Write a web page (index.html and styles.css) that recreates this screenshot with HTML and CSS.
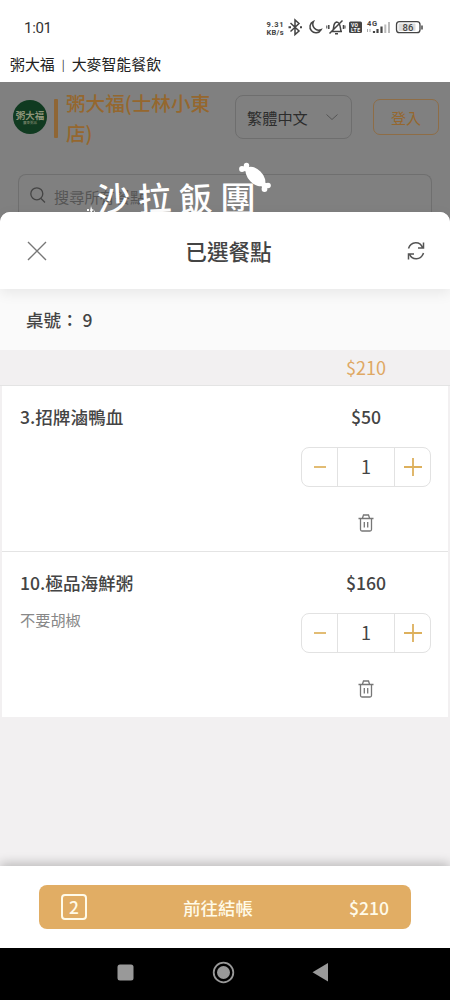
FILE: index.html
```html
<!DOCTYPE html>
<html lang="zh-Hant">
<head>
<meta charset="utf-8">
<title>粥大福 | 大麥智能餐飲</title>
<link rel="stylesheet" href="styles.css">
</head>
<body>
<div class="phone">
  <div class="status">
    <span class="time">1:01</span>
    <svg class="status-icons" width="160" height="24" viewBox="265 15 160 24" fill="none" stroke="#444" stroke-width="1.5">
      <g class="tiny" stroke="none" fill="#444">
        <text x="266.500" y="27" textLength="17">9.31</text>
        <text x="266.500" y="35" textLength="17">KB/s</text>
      </g>
      <path d="M290.500 23l8.500 8-4 3.500V20l4 3.500-8.500 8"/>
      <path d="M288.500 27.300h2.500M300 27.300h2" stroke-width="2"/>
      <path d="M313.500 21.500a5.900 5.900 0 1 0 7.500 8.300a6 6 0 0 1-7.500-8.300z"/>
      <path d="M331 31.500h11M332.500 31c2-2 0-8 4-9c4 0 3.500 5 4.500 9M335 33.800h3M342.500 20.500l-13 13M328.800 25v4M343.500 25v4"/>
      <path d="M326.800 25.500v3M345 25.500v3" stroke-width="1"/>
      <rect x="349" y="21.500" width="13" height="11.500" rx="1.500" fill="#444" stroke="none"/>
      <g class="volte" stroke="none" fill="#fff"><text x="351" y="27" textLength="7">VO</text><text x="351" y="32" textLength="9">LTE</text></g>
      <text class="tiny" x="367" y="26.300" fill="#444" stroke="none" textLength="10">4G</text>
      <path d="M374 31v2M377.500 29v4M381.500 26.500v6.500" stroke-width="2.200"/>
      <path d="M385.300 24.500v8.500M389 22v11" stroke="#bbb" stroke-width="2"/>
      <path d="M367.500 29v3M370 29v3" stroke="#aaa" stroke-width="1"/>
      <rect x="396.500" y="21.700" width="23.500" height="11" rx="3" stroke-width="1.300"/>
      <rect x="398.500" y="23.500" width="17" height="7.500" rx="1" fill="#ddd" stroke="none"/>
      <path d="M422 25.500v4" stroke-width="1.500"/>
      <text class="battery" x="402.500" y="31" fill="#444" stroke="none">86</text>
    </svg>
  </div>
  <div class="page-title">粥大福<span class="sep">|</span>大麥智能餐飲</div>

  <div class="backdrop">
    <div class="shop">
      <div class="logo"><span class="logo-name">粥大福</span><span class="logo-sub">廣東粥品</span></div>
      <div class="accent"></div>
      <div class="shop-name">粥大福(士林小東<br>店)</div>
      <div class="language"><span>繁體中文</span>
        <svg width="12" height="8" viewBox="0 0 12 8" fill="none" stroke="#555"><path d="M.5 1.500L6 6.500l5.500-5"/></svg>
      </div>
      <div class="login">登入</div>
    </div>
    <div class="search">
      <svg width="16" height="17" viewBox="0 0 16 17" fill="none" stroke="#444" stroke-width="1.300"><circle cx="6.800" cy="6.800" r="6"/><path d="M11 11.500l4 4"/></svg>
      <span>搜尋所有餐點</span>
    </div>
    <div class="watermark"><span>沙</span><span>拉</span><span>飯</span><span class="big">團</span></div>
    <svg class="candy" width="190" height="56" viewBox="84 160 190 56" fill="#fff">
      <ellipse cx="255.500" cy="176.500" rx="12" ry="7" transform="rotate(45 255.500 176.500)"/>
      <circle cx="246.500" cy="165.500" r="2.700"/><circle cx="242" cy="169" r="2.900"/><circle cx="246" cy="168.500" r="3"/>
      <circle cx="268" cy="185.500" r="2.800"/><circle cx="264.500" cy="189" r="2.900"/><circle cx="264.500" cy="185.500" r="3"/>
      <path d="M87 209h2v2h-2zM91 206l1 3 2 1-2 1v2l-2-2zM94 210l1 2h-1z"/>
    </svg>
  </div>

  <div class="sheet">
    <div class="sheet-head">
      <svg width="20" height="20" viewBox="0 0 20 20" fill="none" stroke="#777" stroke-width="1.400"><path d="M1 1l18 18M19 1L1 19"/></svg>
      <h1>已選餐點</h1>
      <svg width="18" height="20" viewBox="0 0 18 20" fill="none" stroke="#555" stroke-width="1.500"><path d="M1.500 7.500C4 0 13 0 15.500 6.500M16.500 1.500v5.500h-5.500M16.500 12C14 19.500 5 19.500 2.500 13M1.500 18.500V13H7"/></svg>
    </div>
    <div class="table-no">桌號： 9</div>
    <div class="subtotal"><span>$210</span></div>
    <div class="items">
      <div class="item">
        <div class="info"><div class="name">3.招牌滷鴨血</div></div>
        <div class="controls">
          <div class="price">$50</div>
          <div class="stepper">
            <span><svg width="12" height="20" viewBox="0 0 12 20"><path d="M0 10h12" stroke="#ddb05c" stroke-width="1.700"/></svg></span>
            <span class="count">1</span>
            <span><svg width="20" height="20" viewBox="0 0 20 20"><path d="M1 10h18M10 1v18" stroke="#ddb05c" stroke-width="1.800"/></svg></span>
          </div>
          <svg class="trash" width="16" height="18" viewBox="0 0 16 18" fill="none" stroke="#777" stroke-width="1.300"><path d="M.5 4.500h15M4.500 4l1-3h5l1 3M2.500 4.500v11q0 1.500 1.500 1.500h8q1.500 0 1.500-1.500v-11M6.300 8v5.500M9.700 8v5.500"/></svg>
        </div>
      </div>
      <div class="item">
        <div class="info"><div class="name">10.極品海鮮粥</div><div class="note">不要胡椒</div></div>
        <div class="controls">
          <div class="price">$160</div>
          <div class="stepper">
            <span><svg width="12" height="20" viewBox="0 0 12 20"><path d="M0 10h12" stroke="#ddb05c" stroke-width="1.700"/></svg></span>
            <span class="count">1</span>
            <span><svg width="20" height="20" viewBox="0 0 20 20"><path d="M1 10h18M10 1v18" stroke="#ddb05c" stroke-width="1.800"/></svg></span>
          </div>
          <svg class="trash" width="16" height="18" viewBox="0 0 16 18" fill="none" stroke="#777" stroke-width="1.300"><path d="M.5 4.500h15M4.500 4l1-3h5l1 3M2.500 4.500v11q0 1.500 1.500 1.500h8q1.500 0 1.500-1.500v-11M6.300 8v5.500M9.700 8v5.500"/></svg>
        </div>
      </div>
    </div>
    <div class="footer">
      <div class="checkout"><span class="qty">2</span><span class="go">前往結帳</span><span class="total">$210</span></div>
    </div>
  </div>

  <div class="nav">
    <svg width="450" height="52" viewBox="0 0 450 52" fill="#999">
      <rect x="117.500" y="16.500" width="16" height="16" rx="2.500"/>
      <circle cx="223.500" cy="24.500" r="9.800" fill="none" stroke="#999" stroke-width="1.800"/><circle cx="223.500" cy="24.500" r="6.500"/>
      <path d="M328 15v18.500L312.500 24.300z"/>
    </svg>
  </div>
</div>
</body>
</html>
```
FILE: styles.css
```css
* { box-sizing: border-box; }
body { margin: 0; font-family: "Noto Sans CJK TC", sans-serif; color: #444; }
svg { display: block; flex: none; }
.phone { width: 450px; height: 1000px; display: flex; flex-direction: column; background: #fff; overflow: hidden; }

.status { height: 48px; padding: 15px 25px 0 24px; display: flex; justify-content: space-between; align-items: flex-start; }
.time { font: 15px/26px Roboto, sans-serif; letter-spacing: -.3px; color: #333; }
.tiny { font: bold 7.500px Roboto, sans-serif; }
.volte { font: bold 5px Roboto, sans-serif; }
.battery { font: 500 9.500px Roboto, sans-serif; }
.page-title { height: 34px; padding-left: 10px; font-size: 14.900px; line-height: 31px; color: #222; }
.sep { display: inline-block; width: 17px; text-align: center; font-size: 11px; vertical-align: 1px; }

.backdrop { position: relative; height: 142px; margin-bottom: -12px; flex: none; background: #808080; display: flex; flex-direction: column; }
.shop { height: 92px; display: flex; align-items: flex-start; padding: 0 11px 0 13px; }
.logo { width: 34px; height: 34px; margin-top: 18px; border-radius: 50%; background: #103a20; color: #8d9479; display: flex; flex-direction: column; align-items: center; padding-top: 9px; }
.logo-name { font-size: 9.500px; line-height: 12px; font-weight: 700; }
.logo-sub { font-size: 3.500px; line-height: 4px; }
.accent { width: 4px; height: 39px; margin: 17px 8px 0 7px; background: #8f6635; border-radius: 1px; }
.shop-name { width: 169px; margin-top: 6px; font-size: 19.600px; line-height: 30px; font-weight: 500; color: #95672e; white-space: nowrap; }
.language { width: 117px; height: 44px; margin-top: 13px; padding: 0 13px 0 11px; border: 1px solid #6e6e6e; border-radius: 8px; display: flex; align-items: center; justify-content: space-between; font-size: 15.200px; color: #2c2c2c; }
.login { width: 66px; height: 36px; margin: 17px 0 0 21px; border: 1px solid #8e6d46; border-radius: 7px; font-size: 15px; line-height: 35px; text-align: center; color: #95672e; }
.search { height: 50px; margin: 0 18px; padding: 12px 11px 0; border: 1px solid #6f6f6f; border-bottom: 0; border-radius: 8px 8px 0 0; display: flex; gap: 8px; font-size: 15.200px; line-height: 18px; color: #555; }
.watermark { position: absolute; left: 97px; top: 93px; display: flex; gap: 8px; font-size: 33px; line-height: 44px; font-weight: 500; color: #fff; white-space: nowrap; }
.watermark span { transform: rotate(-3deg); }
.watermark .big { font-size: 36px; transform: none; }
.candy { position: absolute; left: 84px; top: 78px; }

.sheet { position: relative; height: 736px; flex: none; display: flex; flex-direction: column; background: #f2f0f1; border-radius: 10px 10px 0 0; }
.sheet-head { position: relative; z-index: 1; height: 77px; padding: 0 25px 0 27px; display: flex; align-items: center; justify-content: space-between; background: #fff; border-radius: 10px 10px 0 0; box-shadow: 0 4px 14px rgba(0,0,0,.08); }
.sheet-head h1 { margin: 0; padding-left: 3px; font-size: 21.600px; line-height: 30px; font-weight: 500; }
.table-no { height: 61px; padding-left: 26px; background: #fafafa; font-size: 17.500px; line-height: 61px; font-weight: 500; }
.subtotal { height: 36px; padding-right: 19px; display: flex; justify-content: flex-end; border-bottom: 1px solid #e4e4e4; color: #dfa864; font-size: 18px; line-height: 35px; }
.subtotal span { width: 130px; text-align: center; }
.items { margin: 0 2px; }
.item { height: 165px; padding: 0 17px 0 18px; display: flex; justify-content: space-between; background: #fff; }
.item + .item { height: 166px; border-top: 1px solid #e4e4e4; }
.info { padding-top: 16px; }
.name, .price { font-size: 17.600px; line-height: 30px; font-weight: 500; }
.note { margin-top: 8px; font-size: 15.200px; line-height: 26px; color: #888; }
.controls { width: 130px; padding-top: 16px; display: flex; flex-direction: column; align-items: center; }
.stepper { width: 130px; height: 40px; margin-top: 15px; border: 1px solid #e2e2e2; border-radius: 8px; display: grid; grid-template-columns: 35px 58px 35px; }
.stepper span { display: flex; align-items: center; justify-content: center; }
.stepper .count { padding-bottom: 2px; border: solid #e2e2e2; border-width: 0 1px; font-size: 18px; line-height: 36px; }
.trash { margin-top: 27px; }
.footer { height: 82px; margin-top: auto; padding: 19px 39px 0; background: #fff; box-shadow: 0 -3px 10px rgba(0,0,0,.22); }
.checkout { height: 44px; padding: 0 22px; display: grid; grid-template-columns: 90px 1fr 90px; align-items: center; background: #e1ad64; border-radius: 8px; color: #fffbe9; font-weight: 500; font-size: 17.400px; }
.qty { width: 26px; height: 26px; border: 2px solid #fffbe9; border-radius: 4px; line-height: 22px; text-align: center; }
.go { text-align: center; padding-right: 14px; }
.total { text-align: right; font-size: 17.600px; }
.nav { height: 52px; background: #000; }
```
